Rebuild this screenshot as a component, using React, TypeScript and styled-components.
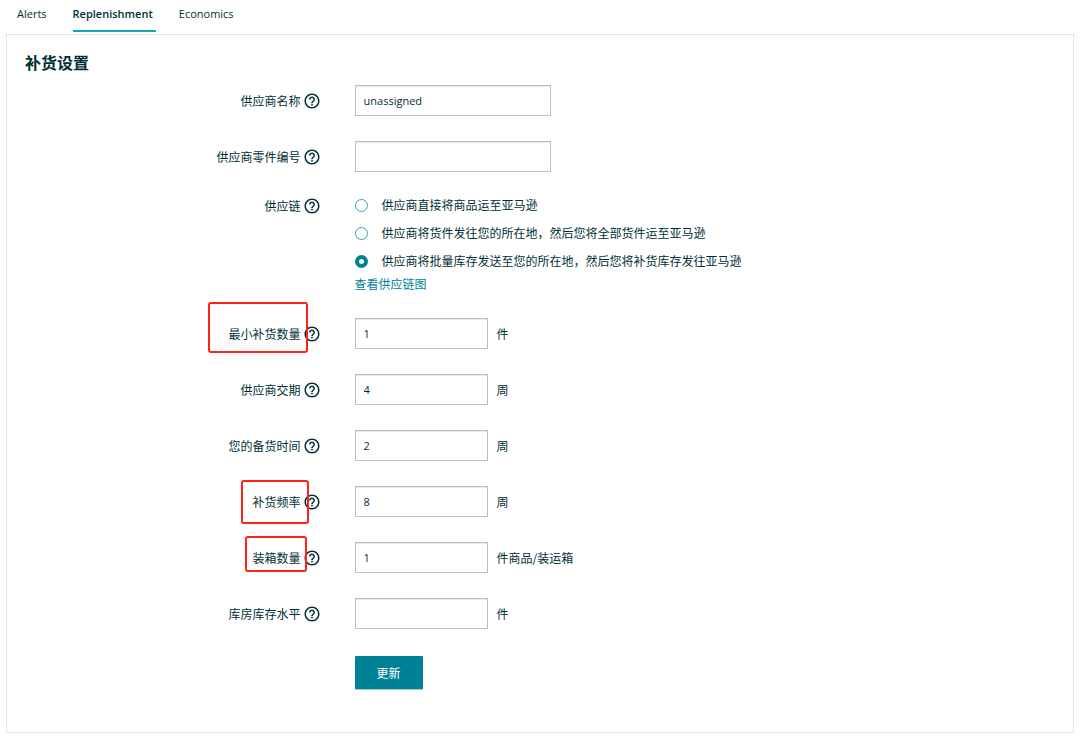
import React from 'react';
import styled, { createGlobalStyle } from 'styled-components';
import { MdHelpOutline } from 'react-icons/md';

const color = {
  text: '#002f36',
  teal: '#008296',
  inputBorder: '#b4c1c2',
  panelBorder: '#e3e4e4',
  mark: '#ff2216',
};

const latinFont = "'Open Sans', 'Noto Sans CJK SC', sans-serif";

const GlobalStyle = createGlobalStyle`
  *, *::before, *::after { box-sizing: border-box; }
  body {
    margin: 0;
    background: #fff;
    color: ${color.text};
    font-family: 'Noto Sans CJK SC', sans-serif;
    font-size: 12px;
    line-height: 16px;
  }
  button, input { font: inherit; color: inherit; }
`;

const Page = styled.div`
  padding: 0 6px 6px;
`;

const Tabs = styled.nav`
  display: flex;
  gap: 23px;
  padding: 0 11px 2px;
`;

const Tab = styled.a<{ $active?: boolean }>`
  padding: 6px 3px 8px 0;
  border-bottom: 2px solid ${p => (p.$active ? '#16a3b4' : 'transparent')};
  font-family: ${latinFont};
  font-size: 11px;
  font-weight: ${p => (p.$active ? 600 : 400)};
  color: inherit;
  text-decoration: none;
`;

const Panel = styled.main`
  padding: 15px 18px 43px;
  border: 1px solid ${color.panelBorder};
`;

const Title = styled.h1`
  margin: 0 0 11px;
  font-size: 16px;
  line-height: 24px;
  font-weight: 700;
`;

const Form = styled.form`
  display: flex;
  flex-direction: column;
  gap: 25px;
`;

const Row = styled.div<{ $top?: boolean }>`
  display: grid;
  grid-template-columns: 32% 1fr;
  align-items: ${p => (p.$top ? 'start' : 'center')};
`;

const LabelCell = styled.div`
  display: flex;
  justify-content: flex-end;
  align-items: center;
  gap: 2px;
  padding-right: 34px;
  height: 18px;
`;

const LabelText = styled.label`
  position: relative;
`;

const Mark = styled.span<{ $inset: string }>`
  position: absolute;
  z-index: 1;
  inset: ${p => p.$inset};
  border: 2px solid ${color.mark};
  border-radius: 3px;
  pointer-events: none;
`;

const HelpButton = styled.button`
  display: flex;
  padding: 0;
  border: 0;
  background: none;
  cursor: pointer;
`;

const Field = styled.div`
  display: flex;
  align-items: center;
  gap: 9px;
`;

const TextInput = styled.input<{ $wide?: boolean }>`
  width: ${p => (p.$wide ? 196 : 133)}px;
  height: 31px;
  padding: 0 8px;
  border: 1px solid ${color.inputBorder};
  border-radius: 0;
  background: #fff;
  box-shadow: inset 0 1px 0 #e6eaea;
  outline: none;
  font-family: ${latinFont};
  font-size: 11px;
`;

const Options = styled.div`
  display: flex;
  flex-direction: column;
  gap: 12px;
`;

const Option = styled.label`
  display: flex;
  align-items: center;
  gap: 14px;
`;

const Radio = styled.input`
  appearance: none;
  width: 13px;
  height: 13px;
  margin: 0;
  border: 1px solid #3aa0ae;
  border-radius: 50%;
  background: #fff;
  &:checked { border: 4px solid ${color.teal}; }
`;

const ChainLink = styled.a`
  display: inline-block;
  margin-top: 6px;
  line-height: 18px;
  vertical-align: top;
  color: ${color.teal};
  text-decoration: none;
`;

const Actions = styled.div`
  padding: 2px 0 0 32%;
`;

const SubmitButton = styled.button`
  display: block;
  height: 33px;
  padding: 0 22px;
  border: 0;
  border-radius: 1px;
  background: ${color.teal};
  box-shadow: 0 1px 0 #a9c6ca;
  color: #fff;
  cursor: pointer;
`;

type FieldLabelProps = { text: string; htmlFor?: string; mark?: string };

function FieldLabel({ text, htmlFor, mark }: FieldLabelProps) {
  return (
    <LabelCell>
      <LabelText htmlFor={htmlFor} as={htmlFor ? 'label' : 'span'} id={htmlFor ? undefined : 'chain-label'}>
        {text}
        {mark && <Mark $inset={mark} />}
      </LabelText>
      <HelpButton type="button" aria-label={text}>
        <MdHelpOutline size={18} />
      </HelpButton>
    </LabelCell>
  );
}

type FieldRowProps = { id: string; text: string; value?: string; unit?: string; mark?: string };

function FieldRow({ id, text, value = '', unit, mark }: FieldRowProps) {
  return (
    <Row>
      <FieldLabel text={text} htmlFor={id} mark={mark} />
      <Field>
        <TextInput id={id} type="text" defaultValue={value} $wide={!unit} />
        {unit && <span>{unit}</span>}
      </Field>
    </Row>
  );
}

const supplier: FieldRowProps[] = [
  { id: 'supplier', text: '供应商名称', value: 'unassigned' },
  { id: 'part', text: '供应商零件编号' },
];

const chains = [
  '供应商直接将商品运至亚马逊',
  '供应商将货件发往您的所在地，然后您将全部货件运至亚马逊',
  '供应商将批量库存发送至您的所在地，然后您将补货库存发往亚马逊',
];

const quantities: FieldRowProps[] = [
  { id: 'minimum', text: '最小补货数量', value: '1', unit: '件', mark: '-24px -7px -11px -21px' },
  { id: 'lead', text: '供应商交期', value: '4', unit: '周' },
  { id: 'prep', text: '您的备货时间', value: '2', unit: '周' },
  { id: 'frequency', text: '补货频率', value: '8', unit: '周', mark: '-14px -8px -14px -12px' },
  { id: 'case', text: '装箱数量', value: '1', unit: '件商品/装运箱', mark: '-14px -6px -6px -8px' },
  { id: 'stock', text: '库房库存水平', unit: '件' },
];

export default function App() {
  return (
    <>
      <GlobalStyle />
      <Page>
        <Tabs>
          <Tab href="#alerts">Alerts</Tab>
          <Tab href="#replenishment" $active aria-current="page">Replenishment</Tab>
          <Tab href="#economics">Economics</Tab>
        </Tabs>
        <Panel>
          <Title>补货设置</Title>
          <Form onSubmit={e => e.preventDefault()}>
            {supplier.map(f => <FieldRow key={f.id} {...f} />)}
            <Row $top>
              <FieldLabel text="供应链" />
              <div>
                <Options role="radiogroup" aria-labelledby="chain-label">
                  {chains.map((text, i) => (
                    <Option key={text}>
                      <Radio type="radio" name="chain" defaultChecked={i === 2} />
                      {text}
                    </Option>
                  ))}
                </Options>
                <ChainLink href="#chain">查看供应链图</ChainLink>
              </div>
            </Row>
            {quantities.map(f => <FieldRow key={f.id} {...f} />)}
            <Actions>
              <SubmitButton type="submit">更新</SubmitButton>
            </Actions>
          </Form>
        </Panel>
      </Page>
    </>
  );
}
